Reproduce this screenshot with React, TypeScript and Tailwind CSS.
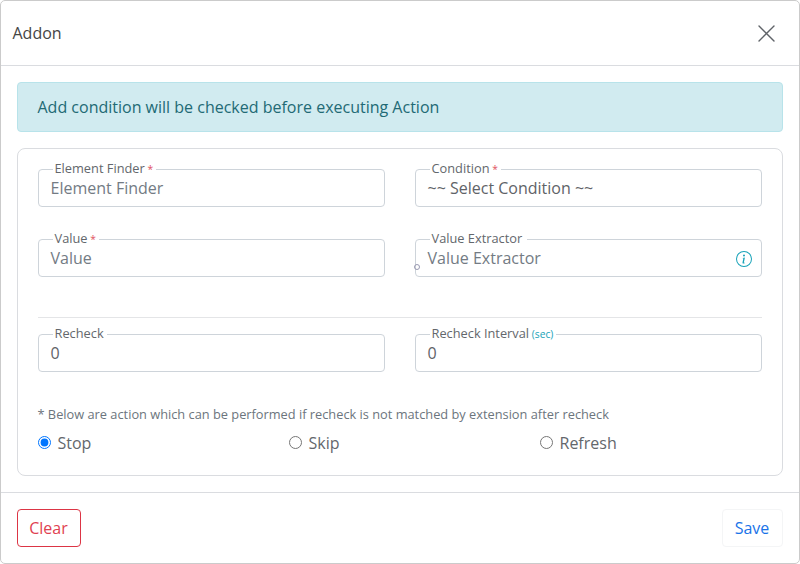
import type { ReactNode } from "react";

type FieldProps = {
  label: string;
  text: string;
  required?: boolean;
  hint?: string;
  tone?: string;
  labelPad?: string;
  children?: ReactNode;
};

function Field({ label, text, required, hint, tone = "text-[#737b84]", labelPad = "pr-[3px]", children }: FieldProps) {
  return (
    <div className="relative flex h-[38px] items-center rounded-[4px] border border-[#ced4da] pl-[11.5px] pr-3">
      <label className={`absolute left-[14px] top-[-12px] flex h-[20px] items-center whitespace-pre bg-white pl-[1.5px] text-[12.8px] leading-[20px] text-[#63676c] ${labelPad}`}>
        {label}
        {required && <span className="pt-[1px] text-[10.24px] text-[#e05260]"> *</span>}
        {hint && <span className="pt-[2px] text-[10.24px] text-[#17a2b8]"> {hint}</span>}
      </label>
      <span className={`whitespace-pre text-[16px] leading-[24px] ${tone}`}>{text}</span>
      {children}
    </div>
  );
}

function InfoIcon() {
  return (
    <svg className="ml-auto mr-[-3px] mt-[2px] size-4" viewBox="0 0 16 16" fill="#17a2b8">
      <path d="M8 15A7 7 0 1 1 8 1a7 7 0 0 1 0 14zm0 1A8 8 0 1 0 8 0a8 8 0 0 0 0 16z" />
      <path d="m8.93 6.588-2.29.287-.082.38.45.083c.294.07.352.176.288.469l-.738 3.468c-.194.897.105 1.319.808 1.319.545 0 1.178-.252 1.465-.598l.088-.416c-.2.176-.492.246-.686.246-.275 0-.375-.193-.304-.533L8.93 6.588zM9 4.5a1 1 0 1 1-2 0 1 1 0 0 1 2 0z" />
    </svg>
  );
}

const actions = ["Stop", "Skip", "Refresh"];

export default function App() {
  return (
    <div className="flex h-[564px] w-[800px] flex-col rounded-[5px] border border-[#cbcbcb] bg-white font-['Open_Sans',sans-serif] text-[16px] leading-[24px] text-[#63676c]">
      <header className="flex h-[65px] items-center justify-between border-b border-[#dadce0] pl-[11.5px] pr-[24px]">
        <h1 className="text-[16px] text-[#454545]">Addon</h1>
        <button aria-label="Close">
          <svg className="size-[17px]" viewBox="0 0 17 17" fill="none" stroke="#5f6368" strokeWidth="1.4" strokeLinecap="round">
            <path d="M1 1l15 15M16 1L1 16" />
          </svg>
        </button>
      </header>

      <main className="flex flex-1 flex-col gap-4 p-4">
        <div className="flex h-[50px] items-center rounded-[4px] border border-[#b8e3ea] bg-[#d1ebf0] px-[19.5px] text-[#226a75]">
          Add condition will be checked before executing Action
        </div>

        <section className="flex h-[328px] flex-col rounded-[8px] border border-[#dadce0] px-5 pt-5">
          <div className="grid grid-cols-2 gap-x-[30px] gap-y-8">
            <Field label="Element Finder" text="Element Finder" required />
            <Field label="Condition" text="~~ Select Condition ~~" required tone="text-[#5f6368]" />
            <Field label="Value" text="Value" required />
            <Field label="Value Extractor" text="Value Extractor" labelPad="pr-[5px]">
              <span className="absolute left-[-2px] top-[24px] size-[6px] rounded-full border border-[#9a9ab2]" />
              <InfoIcon />
            </Field>
          </div>
          <hr className="mb-4 mt-10 border-[#e4e5e7]" />
          <div className="grid grid-cols-2 gap-x-[30px]">
            <Field label="Recheck" text="0" tone="text-[#5f6368]" />
            <Field label="Recheck Interval" text="0" hint="(sec)" tone="text-[#5f6368]" />
          </div>
          <p className="mt-8 whitespace-nowrap text-[12.8px] leading-[20px] text-[#6c757d]">
            <span className="-ml-[0.5px]">* Below are action which can be performed if recheck is not matched by extension after recheck</span>
          </p>
          <div className="mt-[7px] flex">
            {actions.map((action) => (
              <label key={action} className="flex w-[251px] shrink-0 items-center last:w-auto">
                <input type="radio" name="action" defaultChecked={action === "Stop"} className="mr-[6.5px] mt-[-2px] size-[13px]" />
                {action}
              </label>
            ))}
          </div>
        </section>
      </main>

      <footer className="flex h-[71px] items-center justify-between border-t border-[#dadce0] px-4">
        <button className="h-[38px] w-[64px] rounded-[4px] border border-[#dc3545] pr-[1px] text-[#df4151]">Clear</button>
        <button className="h-[38px] w-[61px] rounded-[4px] border border-[#f4f5f6] pr-[1px] text-[#1a73e8]">Save</button>
      </footer>
    </div>
  );
}
